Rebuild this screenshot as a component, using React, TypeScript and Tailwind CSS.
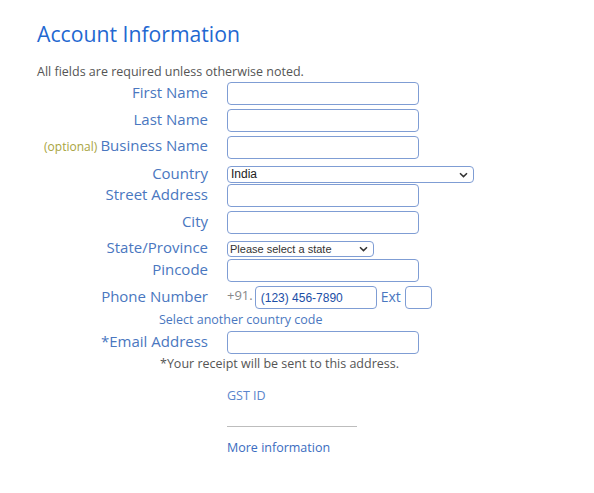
import React from "react";

const labelCls = "w-[171px] shrink-0 whitespace-nowrap text-right text-[15px] text-[#4a77c0] mb-[4px]";
const inputCls = "h-[23px] w-[192px] rounded-[4px] border border-[#7f9dd4] bg-white";

function Chevron() {
  return (
    <svg className="pointer-events-none absolute right-[5px] top-1/2 -translate-y-1/2" width="9" height="6" viewBox="0 0 9 6">
      <path d="M1 1.2 L4.5 4.6 L8 1.2" fill="none" stroke="#333" strokeWidth="1.5" />
    </svg>
  );
}

function Row({
  label,
  children,
  className = "",
  lh = "leading-[18px]",
}: {
  label: React.ReactNode;
  children: React.ReactNode;
  className?: string;
  lh?: string;
}) {
  return (
    <div className={"flex items-center gap-[19px] " + className}>
      <div className={labelCls + " " + lh}>{label}</div>
      {children}
    </div>
  );
}

export default function App() {
  return (
    <div className="w-[594px] h-[493px] bg-white pl-[37px]" style={{ fontFamily: '"Open Sans", sans-serif' }}>
      <h1 className="pt-[18px] text-[21.2px] leading-[32px] text-[#1f68d1] font-normal">Account Information</h1>
      <p className="mt-[14px] text-[12.5px] leading-[16px] text-[#555]">All fields are required unless otherwise noted.</p>
      <div className="mt-[2px] flex flex-col">
        <Row label="First Name" className="h-[23px]">
          <div className={inputCls} />
        </Row>
        <Row label="Last Name" className="mt-[4px] h-[23px]">
          <div className={inputCls} />
        </Row>
        <Row
          label={
            <>
              <span className="text-[12px] text-[#a8a43e]">(optional) </span>Business Name
            </>
          }
          className="mt-[4px] h-[23px]"
        >
          <div className={inputCls} />
        </Row>
        <Row label="Country" className="mt-[7px] h-[17px]" lh="leading-[16px]">
          <div className="relative h-[17px] w-[247px] rounded-[4px] border border-[#7f9dd4] bg-white">
            <span className="block pl-[3px] text-[12px] leading-[15px] text-[#222]" style={{ fontFamily: '"Liberation Sans", Arial, sans-serif' }}>
              India
            </span>
            <Chevron />
          </div>
        </Row>
        <Row label="Street Address" className="mt-[1px] h-[23px]">
          <div className={inputCls} />
        </Row>
        <Row label="City" className="mt-[4px] h-[23px]">
          <div className={inputCls} />
        </Row>
        <Row label="State/Province" className="mt-[7px] h-[16px]" lh="leading-[16px]">
          <div className="relative h-[16px] w-[147px] rounded-[4px] border border-[#7f9dd4] bg-white">
            <span className="block pl-[2px] text-[11px] leading-[14px] text-[#333]" style={{ fontFamily: '"Liberation Sans", Arial, sans-serif' }}>
              Please select a state
            </span>
            <Chevron />
          </div>
        </Row>
        <Row label="Pincode" className="mt-[2px] h-[23px]">
          <div className={inputCls} />
        </Row>
        <Row label="Phone Number" className="mt-[4px] h-[23px]">
          <div className="flex items-center">
            <span className="mb-[3px] text-[13px] text-[#888]">+91.</span>
            <div className="ml-[2px] flex h-[23px] w-[122px] items-center rounded-[4px] border border-[#7f9dd4] bg-white pl-[5px]">
              <span className="text-[12px] text-[#1b4ea6]" style={{ fontFamily: '"Liberation Sans", Arial, sans-serif' }}>
                (123) 456-7890
              </span>
            </div>
            <span className="mb-[3px] ml-[4px] text-[14px] text-[#4a77c0]">Ext</span>
            <div className="ml-[4px] h-[23px] w-[27px] rounded-[4px] border border-[#7f9dd4] bg-white" />
          </div>
        </Row>
        <p className="mt-[1px] pl-[122px] text-[12.5px] leading-[20px] text-[#4a77c0]">Select another country code</p>
        <Row label="*Email Address" className="mt-[1px] h-[23px]">
          <div className={inputCls} />
        </Row>
        <p className="pl-[123px] text-[12.5px] leading-[20px] text-[#555]">*Your receipt will be sent to this address.</p>
        <div className="pl-[190px]">
          <p className="mt-[12px] text-[12.5px] leading-[20px] text-[#5a85cc]">GST ID</p>
          <div className="mt-[20px] h-px w-[130px] bg-[#bdbdbd]" />
          <p className="mt-[11px] text-[12.5px] leading-[20px] text-[#3a6cc0]">More information</p>
        </div>
      </div>
    </div>
  );
}
